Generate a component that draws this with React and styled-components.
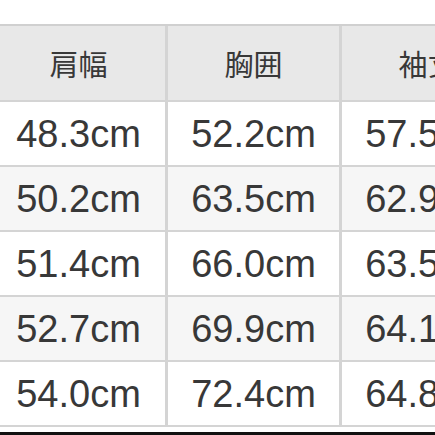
import React from 'react'
import styled, { createGlobalStyle } from 'styled-components'

const GlobalStyle = createGlobalStyle`
    html, body {
        margin: 0;
        padding: 0;
        background: #ffffff;
        overflow: hidden;
    }
`

const headers = ['肩幅', '胸囲', '袖丈']

const rows = [
    ['48.3cm', '52.2cm', '57.5cm'],
    ['50.2cm', '63.5cm', '62.9cm'],
    ['51.4cm', '66.0cm', '63.5cm'],
    ['52.7cm', '69.9cm', '64.1cm'],
    ['54.0cm', '72.4cm', '64.8cm'],
]

export default function App() {
    return (
        <>
            <GlobalStyle />
            <Page>
                <Table>
                    {headers.map((h) => (
                        <HeadCell key={h}>{h}</HeadCell>
                    ))}
                    {rows.map((row, i) =>
                        row.map((value, j) => (
                            <Cell key={`${i}-${j}`} $striped={i % 2 === 1}>
                                {value}
                            </Cell>
                        ))
                    )}
                </Table>
                <BottomBar />
            </Page>
        </>
    )
}

const Page = styled.div`
    width: 435px;
    height: 435px;
    overflow: hidden;
    padding-top: 24px;
    box-sizing: border-box;
    display: flex;
    flex-direction: column;
`

const Table = styled.div`
    display: grid;
    grid-template-columns: 176px 174px 174px;
    grid-template-rows: 76px repeat(5, 65px);
    margin-left: -8px;
    width: 524px;
    border-top: 2px solid #d0d0d0;
`

const BaseCell = styled.div`
    display: flex;
    align-items: center;
    justify-content: center;
    box-sizing: border-box;
    border-right: 3px solid #d4d4d4;
    border-bottom: 2px solid #d4d4d4;
    color: #383838;
    white-space: nowrap;
`

const HeadCell = styled(BaseCell)`
    background: #e8e8e8;
    font-family: 'Noto Sans CJK JP', 'Noto Sans', sans-serif;
    font-size: 29px;
`

const Cell = styled(BaseCell)`
    background: ${(p) => (p.$striped ? '#f6f6f6' : '#ffffff')};
    font-family: 'Liberation Sans', Arial, sans-serif;
    font-size: 38px;
    padding-top: 1px;
`

const BottomBar = styled.div`
    margin-top: 5px;
    height: 4px;
    background: #111111;
`
